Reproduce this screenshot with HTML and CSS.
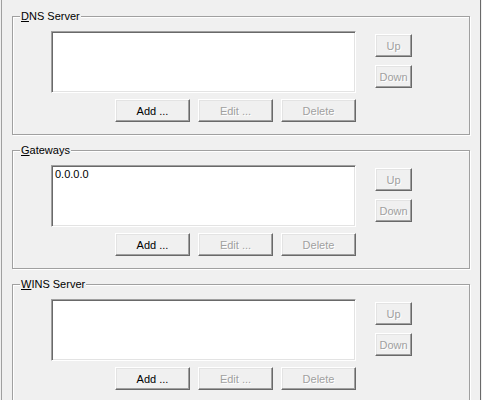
FILE: index.html
```html
<!DOCTYPE html>
<html lang="en">
<head>
    <meta charset="UTF-8">
    <title>TCP/IP Settings</title>
    <link rel="stylesheet" href="styles.css">
</head>
<body>
    <div class="page">
        <!-- DNS -->
        <fieldset class="group">
            <legend><u>D</u>NS Server</legend>
            <div class="group-body">
                <div class="list"></div>
                <div class="order">
                    <button class="btn" disabled>Up</button>
                    <button class="btn" disabled>Down</button>
                </div>
                <div class="actions">
                    <button class="btn btn-wide">Add ...</button>
                    <button class="btn btn-wide" disabled>Edit ...</button>
                    <button class="btn btn-wide" disabled>Delete</button>
                </div>
            </div>
        </fieldset>

        <!-- Gateways -->
        <fieldset class="group">
            <legend><u>G</u>ateways</legend>
            <div class="group-body">
                <div class="list">
                    <div class="list-item">0.0.0.0</div>
                </div>
                <div class="order">
                    <button class="btn" disabled>Up</button>
                    <button class="btn" disabled>Down</button>
                </div>
                <div class="actions">
                    <button class="btn btn-wide">Add ...</button>
                    <button class="btn btn-wide" disabled>Edit ...</button>
                    <button class="btn btn-wide" disabled>Delete</button>
                </div>
            </div>
        </fieldset>

        <!-- WINS -->
        <fieldset class="group">
            <legend><u>W</u>INS Server</legend>
            <div class="group-body">
                <div class="list"></div>
                <div class="order">
                    <button class="btn" disabled>Up</button>
                    <button class="btn" disabled>Down</button>
                </div>
                <div class="actions">
                    <button class="btn btn-wide">Add ...</button>
                    <button class="btn btn-wide" disabled>Edit ...</button>
                    <button class="btn btn-wide" disabled>Delete</button>
                </div>
            </div>
        </fieldset>
    </div>
</body>
</html>
```
FILE: styles.css
```css
body {
    margin: 0;
    background-color: #f0f0f0;
    font-family: "Liberation Sans", Arial, sans-serif;
    font-size: 11px;
    color: #000;
}

.page {
    margin: 0 1px;
    padding: 10px 10px 0 10px;
    border-left: 1px solid #a0a0a0;
    border-right: 1px solid #696969;
    min-height: 400px;
}

.group {
    margin: 0 0 9px 0;
    padding: 0;
    min-inline-size: 0;
    border: 1px solid #a0a0a0;
    box-shadow: inset 1px 1px #fff, 1px 1px #fff;
}

.group legend {
    margin-left: 7px;
    padding: 0 1px;
    line-height: 13px;
    background-color: #f0f0f0;
}

.group-body {
    display: grid;
    grid-template-columns: 305px 37px;
    column-gap: 19px;
    row-gap: 6px;
    padding: 8px 0 12px 38px;
}

.list {
    height: 62px;
    box-sizing: border-box;
    background-color: #fff;
    border: 1px solid;
    border-color: #a0a0a0 #fff #fff #a0a0a0;
    box-shadow: inset 1px 1px #696969, inset -1px -1px #e3e3e3;
    padding: 2px 2px;
}

.list-item {
    line-height: 13px;
    padding-left: 1px;
}

.order {
    display: flex;
    flex-direction: column;
    gap: 8px;
    padding-top: 3px;
}

.actions {
    grid-column: 1;
    display: flex;
    justify-content: flex-end;
    gap: 8px;
}

.btn {
    height: 23px;
    width: 37px;
    padding: 0;
    box-sizing: border-box;
    font: inherit;
    color: #000;
    background-color: #f0f0f0;
    border: 1px solid;
    border-color: #fff #696969 #696969 #fff;
    box-shadow: inset -1px -1px #a0a0a0, inset 1px 1px #e3e3e3;
    border-radius: 0;
}

.btn-wide {
    width: 75px;
}

.btn:disabled {
    color: #a0a0a0;
    text-shadow: 1px 1px #fff;
}
```
